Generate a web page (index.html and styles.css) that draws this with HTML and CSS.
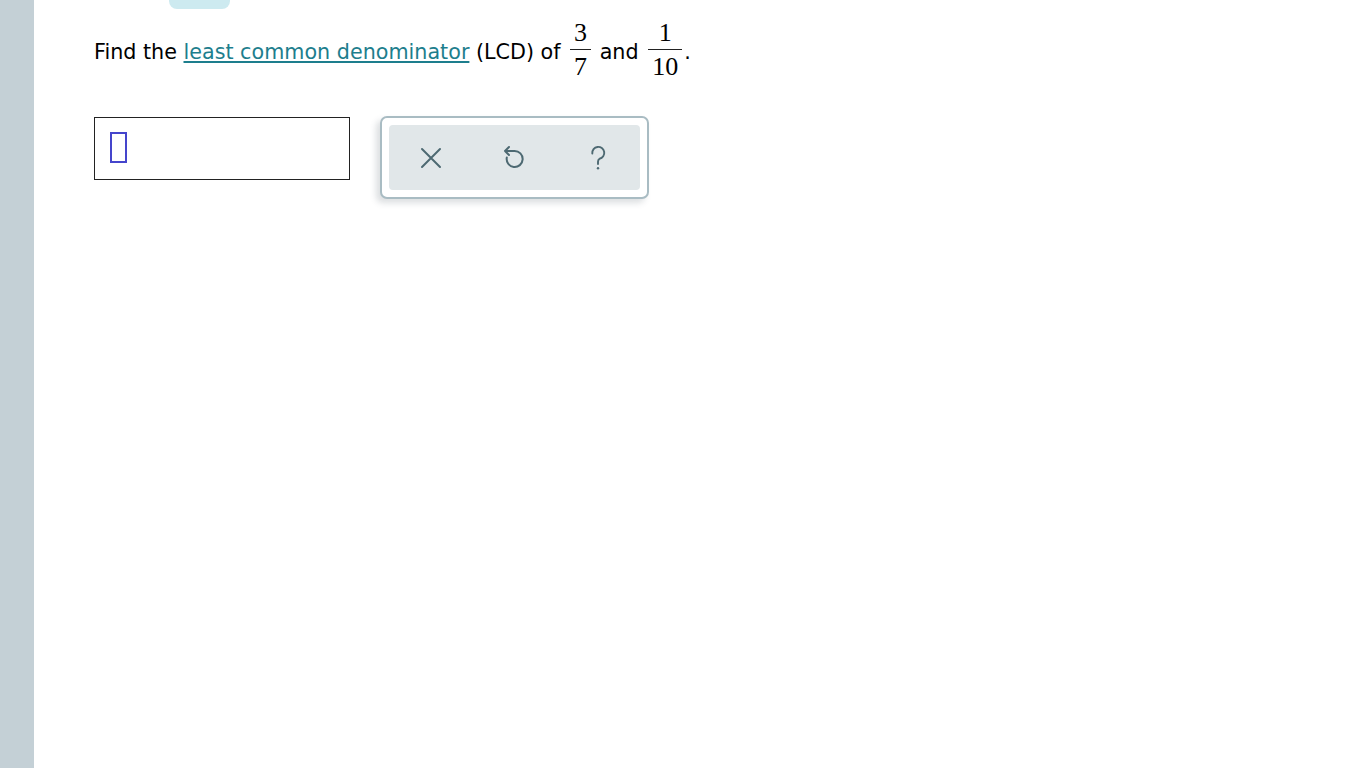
FILE: index.html
```html
<!DOCTYPE html>
<html>
<head>
<meta charset="utf-8">
<link rel="stylesheet" href="styles.css">
</head>
<body>
<div class="page">
  <div class="sidebar"></div>
  <div class="main">
    <div class="tab"></div>
    <p class="question">Find the <a class="link" href="#">least common denominator</a> (LCD) of <span class="frac"><span class="num">3</span><span class="bar"></span><span class="den">7</span></span> and <span class="frac"><span class="num">1</span><span class="bar"></span><span class="den">10</span></span>.</p>
    <div class="answer-row">
      <div class="answer-box"><span class="cursor"></span></div>
      <div class="tools">
        <div class="tools-inner">
          <button class="tool" aria-label="Clear">
            <svg width="24" height="24" viewBox="0 0 24 24"><path d="M3 3 L21 21 M21 3 L3 21" stroke="#4d6972" stroke-width="2" fill="none" stroke-linecap="round"/></svg>
          </button>
          <button class="tool" aria-label="Undo">
            <svg width="26" height="26" viewBox="0 0 26 26"><path d="M8 2 L4 6 L8 10 M4 6 H13.5 A8 8 0 1 1 5.8 12.5" stroke="#4d6972" stroke-width="2" fill="none" stroke-linecap="round" stroke-linejoin="round"/></svg>
          </button>
          <button class="tool" aria-label="Help">
            <svg width="26" height="26" viewBox="0 0 26 26"><path d="M7.3 8.5 A6 6 0 1 1 14.5 13.8 Q13 14.6 13 16.8 V19" stroke="#4d6972" stroke-width="1.9" fill="none" stroke-linecap="round"/><circle cx="13" cy="23.3" r="1.2" fill="#4d6972"/></svg>
          </button>
        </div>
      </div>
    </div>
  </div>
</div>
</body>
</html>
```
FILE: styles.css
```css
html, body {
  margin: 0;
  padding: 0;
  background: #ffffff;
}
.page {
  display: flex;
  height: 768px;
  overflow: hidden;
}
.sidebar {
  width: 34px;
  flex: none;
  background: #c4d0d6;
}
.main {
  flex: 1;
  position: relative;
  padding-left: 60px;
}
.tab {
  position: absolute;
  left: 135px;
  top: 0;
  width: 61px;
  height: 9px;
  background: #cdeaf0;
  border-radius: 0 0 8px 8px;
}
.question {
  margin: 0;
  padding-top: 21px;
  font-family: "DejaVu Sans", Verdana, sans-serif;
  font-size: 20.7px;
  line-height: 24px;
  color: #000;
}
.link {
  color: #1d7e8d;
  text-decoration: underline;
  text-underline-offset: 2px;
}
.frac {
  display: inline-block;
  vertical-align: -16px;
  text-align: center;
  font-family: "Liberation Serif", "Times New Roman", serif;
  font-size: 26px;
  margin: 0 2px 0 3px;
}
.frac .num, .frac .den {
  display: block;
  line-height: 24px;
  padding: 0 4px;
}
.frac .bar {
  display: block;
  height: 1px;
  background: #222;
  margin: 4px 0 5px;
}
.answer-row {
  display: flex;
  align-items: flex-start;
  gap: 30px;
  margin-top: 37px;
}
.answer-box {
  box-sizing: border-box;
  width: 256px;
  height: 63px;
  margin-top: 1px;
  border: 1px solid #222;
  padding: 14px 0 0 15px;
}
.cursor {
  display: block;
  box-sizing: border-box;
  width: 17px;
  height: 31px;
  border: 2px solid #4545cc;
}
.tools {
  box-sizing: border-box;
  width: 269px;
  height: 83px;
  border: 2px solid #a9bcc3;
  border-radius: 7px;
  padding: 7px;
  background: #fff;
  box-shadow: -4px 4px 6px rgba(60, 80, 90, 0.18);
}
.tools-inner {
  display: grid;
  grid-template-columns: 1fr 1fr 1fr;
  height: 100%;
  background: #e1e7e9;
  border-radius: 4px;
}
.tool {
  border: 0;
  background: transparent;
  padding: 0;
  display: flex;
  align-items: center;
  justify-content: center;
}
.tool svg {
  display: block;
}
```
